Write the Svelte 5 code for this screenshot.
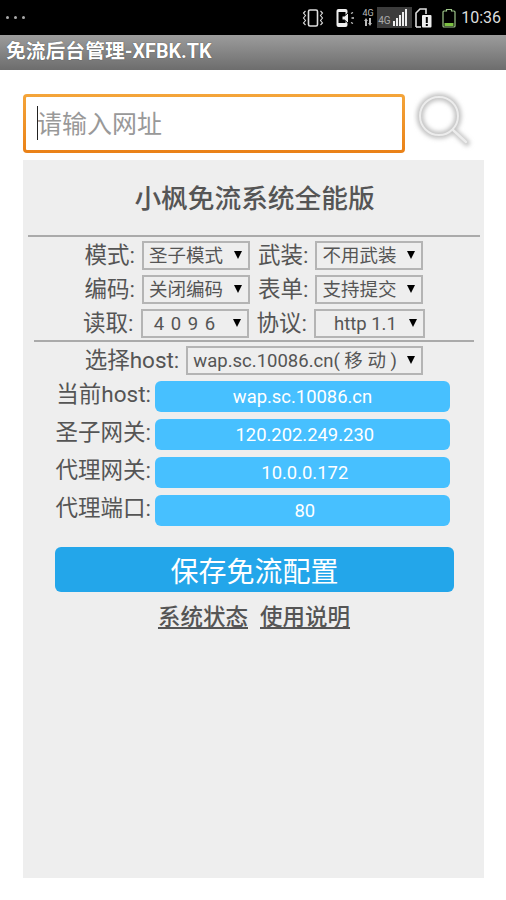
<script>
  let url = $state('');

  let mode = $state('圣子模式');
  let disguise = $state('不用武装');
  let encoding = $state('关闭编码');
  let form = $state('支持提交');
  let readSize = $state('4 0 9 6');
  let protocol = $state('http 1.1');
  let host = $state('wap.sc.10086.cn( 移 动 )');

  // the leading spaces are in the original values, they push the text off centre
  const fields = [
    { label: '当前host:', value: 'wap.sc.10086.cn' },
    { label: '圣子网关:', value: ' 120.202.249.230' },
    { label: '代理网关:', value: ' 10.0.0.172' },
    { label: '代理端口:', value: ' 80' }
  ];
</script>

<div class="status">
  <div class="dots"><i></i><i></i><i></i></div>
  <div class="icons">
    <svg class="vibrate" width="22" height="20" viewBox="0 0 22 20" fill="none" stroke="#ddd">
      <rect x="6.5" y="2" width="9" height="16" rx="1.5" stroke-width="1.6" />
      <path d="M3.5 3 L1.5 5 L3.5 7.5 L1.5 10 L3.5 12.5 L1.5 15 L3.5 17" stroke-width="1.1" />
      <path d="M18.5 3 L20.5 5 L18.5 7.5 L20.5 10 L18.5 12.5 L20.5 15 L18.5 17" stroke-width="1.1" />
    </svg>
    <svg class="speaker" width="20" height="20" viewBox="0 0 20 20">
      <rect x="0.5" y="1" width="11" height="18" rx="2" fill="#eee" />
      <rect x="2.5" y="4" width="7" height="11" fill="#000" />
      <path d="M6 8 H8.5 L12.5 4.5 V15.5 L8.5 12 H6 Z" fill="#eee" stroke="#000" stroke-width="1" />
      <path d="M15 5.5 L17 4.5 M15.5 10 H18 M15 14.5 L17 15.5" stroke="#ccc" stroke-width="1.3" />
    </svg>
    <div class="net">
      <span>4G</span>
      <svg width="10" height="8" viewBox="0 0 10 8" fill="#bbb">
        <path d="M3 0 L5 3 H4 V8 H2 V3 H1 Z M7 8 L5 5 H6 V0 H8 V5 H9 Z" />
      </svg>
    </div>
    <div class="signal">
      <span>4G</span>
      <b class="b1"></b><b class="b2"></b><b class="b3"></b><b class="b4"></b><b class="b5"></b>
    </div>
    <svg class="sim" width="17" height="20" viewBox="0 0 17 20">
      <path d="M1 19 V5 L5 1 H11 V6" fill="none" stroke="#ddd" stroke-width="1.6" />
      <path d="M1 19 H6" stroke="#ddd" stroke-width="1.6" />
      <rect x="7" y="7" width="9.5" height="12.5" rx="1" fill="#eee" />
      <rect x="10.8" y="9" width="2" height="6" fill="#000" />
      <rect x="10.8" y="16" width="2" height="2" fill="#000" />
    </svg>
    <svg class="battery" width="14" height="20" viewBox="0 0 14 20">
      <path d="M4.5 1.5 H9.5 V3 H12 A1 1 0 0 1 13 4 V18 A1 1 0 0 1 12 19 H2 A1 1 0 0 1 1 18 V4 A1 1 0 0 1 2 3 H4.5 Z" fill="none" stroke="#9fc78a" stroke-width="1.2" />
      <rect x="2.5" y="15" width="9" height="3" fill="#7cc142" />
    </svg>
    <span class="time">10:36</span>
  </div>
</div>

<div class="appbar">免流后台管理-XFBK.TK</div>

<div class="search">
  <div class="search-box">
    <input type="text" placeholder="请输入网址" bind:value={url} />
    <span class="caret"></span>
  </div>
  <svg class="search-icon" width="62" height="62" viewBox="0 0 62 62" fill="none">
    <defs>
      <filter id="soft" x="-20%" y="-20%" width="140%" height="140%">
        <feGaussianBlur stdDeviation="2.2" />
      </filter>
      <filter id="softer" x="-20%" y="-20%" width="140%" height="140%">
        <feGaussianBlur stdDeviation="0.7" />
      </filter>
    </defs>
    <g filter="url(#soft)" stroke="#c2c2c2" stroke-linecap="round">
      <circle cx="26" cy="26" r="19" stroke-width="7" />
      <path d="M40 40 L54 53" stroke-width="6" />
    </g>
    <g filter="url(#softer)" stroke="#ececec" stroke-linecap="round">
      <circle cx="26" cy="26" r="19" stroke-width="2" />
      <path d="M40 40 L53 52" stroke-width="2.4" />
    </g>
  </svg>
</div>

<div class="panel">
  <h1>小枫免流系统全能版</h1>
  <div class="rule first"></div>

  <div class="row">
    <span class="lbl">模式:</span>
    <div class="sel"><select bind:value={mode}><option>圣子模式</option><option>普通模式</option></select></div>
    <span class="lbl next">武装:</span>
    <div class="sel"><select bind:value={disguise}><option>不用武装</option><option>开启武装</option></select></div>
  </div>
  <div class="row">
    <span class="lbl">编码:</span>
    <div class="sel"><select bind:value={encoding}><option>关闭编码</option><option>开启编码</option></select></div>
    <span class="lbl next">表单:</span>
    <div class="sel"><select bind:value={form}><option>支持提交</option><option>禁止提交</option></select></div>
  </div>
  <div class="row">
    <span class="lbl">读取:</span>
    <div class="sel"><select class="read" bind:value={readSize}><option>4 0 9 6</option><option>2 0 4 8</option></select></div>
    <span class="lbl next">协议:</span>
    <div class="sel wide"><select class="proto" bind:value={protocol}><option>http 1.1</option><option>http 1.0</option></select></div>
  </div>

  <div class="rule second"></div>

  <div class="row">
    <span class="lbl">选择host:</span>
    <div class="sel host"><select bind:value={host}><option>wap.sc.10086.cn( 移 动 )</option></select></div>
  </div>

  <div class="fields">
    {#each fields as f}
      <span class="field-label">{f.label}</span>
      <input class="field" type="text" value={f.value} />
    {/each}
  </div>

  <button class="save">保存免流配置</button>

  <div class="links">
    <a href="#status">系统状态</a>
    <a href="#help">使用说明</a>
  </div>
</div>

<style>
  :global(body) {
    background: #fff;
    font-family: Roboto, "Noto Sans CJK SC", sans-serif;
    height: 900px;
    overflow: hidden;
  }

  .status {
    height: 35px;
    background: #000;
    display: flex;
    align-items: center;
    justify-content: space-between;
    padding: 0 5px 0 6px;
  }

  .dots {
    display: flex;
    gap: 5px;
  }

  .dots i {
    width: 3px;
    height: 3px;
    border-radius: 50%;
    background: #aaa;
  }

  .icons {
    display: flex;
    align-items: center;
  }

  .speaker {
    margin-left: 12px;
  }

  .net {
    width: 14px;
    margin-left: 5px;
    display: flex;
    flex-direction: column;
    align-items: center;
    color: #bbb;
    font-size: 9px;
    line-height: 9px;
  }

  .signal {
    width: 35px;
    height: 21px;
    margin-left: 2px;
    background: #3c3c3c;
    display: flex;
    align-items: flex-end;
    gap: 1px;
    padding: 0 2px 2px 1px;
    box-sizing: border-box;
    color: #aaa;
    font-size: 10px;
    line-height: 10px;
  }

  .signal span {
    margin-right: 1px;
  }

  .signal b {
    width: 2px;
    background: #eee;
  }

  .b1 { height: 5px; }
  .b2 { height: 8px; }
  .b3 { height: 11px; }
  .b4 { height: 14px; }
  .b5 { height: 17px; }

  .sim {
    margin-left: 3px;
  }

  .battery {
    margin-left: 10px;
  }

  .time {
    margin-left: 5px;
    color: #ddd;
    font-size: 16px;
  }

  .appbar {
    height: 35px;
    line-height: 34px;
    box-sizing: border-box;
    padding-left: 6px;
    background: linear-gradient(#9c9c9c, #6d6d6d);
    color: #fff;
    font-size: 19.8px;
    font-weight: 700;
    text-shadow: 0 0 1px #333;
    white-space: nowrap;
  }

  .search {
    display: flex;
    align-items: flex-start;
    padding: 24px 0 0 23px;
    height: 90px;
    box-sizing: border-box;
  }

  .search-box {
    position: relative;
    width: 382px;
    height: 59px;
    box-sizing: border-box;
    padding: 3px;
    border-radius: 4px;
    background: linear-gradient(#f4a53a, #ea8117);
  }

  .search-box input {
    display: block;
    width: 100%;
    height: 100%;
    box-sizing: border-box;
    border: 0;
    outline: 0;
    padding: 1px 0 0 11px;
    border-radius: 1px;
    background: #fff;
    color: #444;
    font-family: inherit;
    font-size: 25px;
  }

  .search-box input::placeholder {
    color: #999;
    opacity: 1;
  }

  .caret {
    position: absolute;
    left: 14px;
    top: 12px;
    width: 1px;
    height: 34px;
    background: #222;
  }

  .search-icon {
    margin: -4px 0 0 8px;
  }

  .panel {
    width: 461px;
    height: 718px;
    margin-left: 23px;
    box-sizing: border-box;
    background: #eee;
    color: #555;
    overflow: hidden;
  }

  h1 {
    margin: 0;
    height: 75px;
    padding: 22px 0 0 2px;
    box-sizing: border-box;
    text-align: center;
    color: #555;
    font-size: 26.7px;
    line-height: 34px;
    font-weight: 500;
  }

  .rule {
    height: 2px;
    background: #aaa;
  }

  .rule.first {
    margin: 0 4px 4px 5px;
  }

  .rule.second {
    margin: -3px 10px 4px 11px;
  }

  .row {
    display: flex;
    justify-content: center;
    align-items: center;
    height: 29px;
    margin-bottom: 5px;
    padding-left: 1px;
    white-space: nowrap;
  }

  .lbl {
    font-size: 22.5px;
    line-height: 29px;
    margin-right: 7px;
  }

  .lbl.next {
    margin-left: 8px;
  }

  .sel {
    position: relative;
    width: 108px;
    height: 29px;
  }

  .sel.wide {
    width: 111px;
  }

  .sel.host {
    width: 237px;
  }

  .sel::after {
    content: '';
    position: absolute;
    right: 8px;
    top: 10px;
    border-left: 4px solid transparent;
    border-right: 4px solid transparent;
    border-top: 8px solid #000;
    pointer-events: none;
  }

  select {
    appearance: none;
    display: block;
    width: 100%;
    height: 100%;
    box-sizing: border-box;
    border: 2px solid #b4b4b4;
    border-radius: 0;
    outline: 0;
    padding: 0 0 0 5px;
    background: #eee;
    color: #555;
    font-family: inherit;
    font-size: 18.5px;
  }

  select.read {
    text-align-last: center;
    padding: 0 20px 0 0;
    word-spacing: 2px;
  }

  select.proto {
    padding: 0 0 0 18px;
  }

  .fields {
    display: grid;
    grid-template-columns: 128px 295px;
    column-gap: 4px;
    row-gap: 7px;
    margin-top: 6px;
  }

  .field-label {
    font-size: 22.5px;
    line-height: 26px;
    text-align: right;
    white-space: nowrap;
  }

  .field {
    width: 100%;
    height: 31px;
    box-sizing: border-box;
    border: 0;
    outline: 0;
    border-radius: 6px;
    background: #47c0ff;
    color: #fff;
    font-family: inherit;
    font-size: 18.4px;
    text-align: center;
    padding: 0;
    white-space: pre;
  }

  .save {
    display: block;
    width: 399px;
    height: 45px;
    margin: 21px 0 0 32px;
    border: 0;
    border-radius: 6px;
    background: #23a6ea;
    color: #fff;
    font-family: inherit;
    font-size: 28px;
    padding: 0;
  }

  .links {
    display: flex;
    justify-content: center;
    gap: 12px;
    margin-top: 10px;
    padding-left: 1px;
  }

  .links a {
    color: #555;
    font-size: 22.5px;
    line-height: 30px;
    font-weight: 500;
  }
</style>
